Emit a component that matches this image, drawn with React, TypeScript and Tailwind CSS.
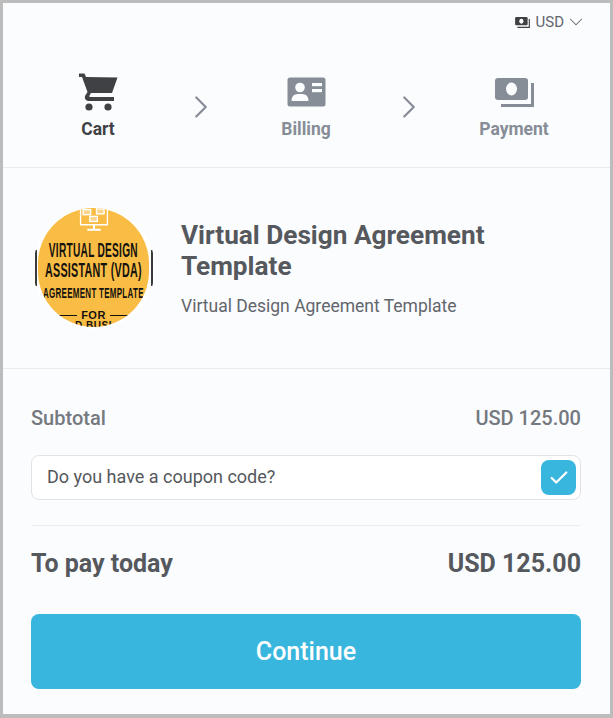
import { ChevronDown, ChevronRight, Check } from "lucide-react";

function CartIcon() {
    return (
        <svg width="40" height="40" viewBox="0 0 40 40" fill="#3f4144">
            <path d="M1 1.5 L6.5 1.5 L8 5 L39.5 5.5 L34 21 L13 21 L11.5 23.5 L11.5 25 L36 25 L36 29 L10 29 Q6 28 7 24 L9.5 20 L4 5 L1 5 Z" />
            <circle cx="11" cy="35" r="3.6" />
            <circle cx="30" cy="35" r="3.6" />
        </svg>
    );
}

function BillingIcon() {
    return (
        <svg width="39" height="30" viewBox="0 0 39 30">
            <rect x="0.5" y="0.5" width="38" height="29" rx="2.5" fill="#868d96" />
            <circle cx="13" cy="10.5" r="4.8" fill="#fbfcfe" />
            <path d="M4.5 24 Q4.5 17 11 17 L15 17 Q21.5 17 21.5 24 Z" fill="#fbfcfe" />
            <rect x="25" y="6" width="10" height="3.2" fill="#fbfcfe" />
            <rect x="25" y="12" width="10" height="3.2" fill="#fbfcfe" />
        </svg>
    );
}

function MoneyIcon({ color, width, height }: { color: string; width: number; height: number }) {
    return (
        <svg width={width} height={height} viewBox="0 0 39 29">
            <rect x="0" y="0" width="33" height="22" rx="3" fill={color} />
            <ellipse cx="16.5" cy="11" rx="5.5" ry="6.5" fill="#fbfcfe" />
            <path d="M36 5 L39 5 L39 29 L6 29 L6 26 L36 26 Z" fill={color} />
        </svg>
    );
}

function Step({ icon, label, active }: { icon: React.ReactNode; label: string; active?: boolean }) {
    return (
        <div className="flex w-[120px] flex-col items-center">
            <div className="flex h-[46px] items-center justify-center">{icon}</div>
            <span className={`mt-[2px] text-[17.5px] leading-[24px] font-bold ${active ? "text-[#3f4144]" : "text-[#868d96]"}`}>
                {label}
            </span>
        </div>
    );
}

function ProductImage() {
    return (
        <div className="relative h-[122px] w-[122px] shrink-0 overflow-hidden rounded-full bg-white">
            <div className="absolute top-[43px] left-[2px] h-[36px] w-[2px] bg-[#3a3a3a]" />
            <div className="absolute top-[43px] left-[118px] h-[36px] w-[2px] bg-[#3a3a3a]" />
            <div className="absolute top-px bottom-[2px] left-[5px] flex w-[111px] flex-col items-center overflow-hidden rounded-full bg-[#f9bd45] font-['Liberation_Sans',sans-serif] text-[#15120e]">
                <svg className="shrink-0" width="36" height="26" viewBox="0 0 42 31" fill="none" stroke="#fff" strokeWidth="1.6">
                    <path d="M5 0 V20 H37 V0" />
                    <path d="M21 20 V25 M13 26 H29" strokeWidth="2.4" />
                    <rect x="8" y="2" width="9" height="6" fill="#fbd58e" />
                    <rect x="24" y="1" width="9" height="6" fill="#fbd58e" />
                    <rect x="16" y="10" width="9" height="6" fill="#fbd58e" />
                </svg>
                <div className="mt-[6px] whitespace-nowrap text-center leading-none font-bold">
                    <div className="scale-x-[.52] text-[19.5px] leading-[20px] tracking-[.5px]">VIRTUAL DESIGN</div>
                    <div className="scale-x-[.55] text-[19.5px] leading-[20px] tracking-[.5px]">ASSISTANT (VDA)</div>
                    <div className="mt-[4px] scale-x-[.57] text-[14px] leading-[18px] tracking-[.5px]">AGREEMENT TEMPLATE</div>
                </div>
                <div className="mt-[8px] flex items-center gap-[4px] text-[11px] leading-[11px] font-bold tracking-[.5px]">
                    <span className="h-[1.5px] w-[20px] bg-[#15120e]" />
                    FOR
                    <span className="h-[1.5px] w-[20px] bg-[#15120e]" />
                </div>
                <div className="text-[10px] leading-[10px] font-bold tracking-[.5px] whitespace-nowrap">D BUSI</div>
            </div>
        </div>
    );
}

export default function App() {
    return (
        <div className="h-[718px] w-[613px] border-[3px] border-b-[4px] border-[#bcbcbc] bg-[#fbfcfe] font-['Roboto',sans-serif]">
            <div className="flex h-[165px] flex-col border-b border-[#e9ebee]">
                <div className="flex items-center justify-end gap-[6px] pt-[8px] pr-[23px] text-[15px] leading-[16px] text-[#62666c]">
                    <MoneyIcon color="#3f4144" width={15} height={11} />
                    <span>USD</span>
                    <ChevronDown size={22} strokeWidth={1.1} className="-ml-[5px]" />
                </div>
                <div className="mt-[36px] flex items-start justify-center pr-px">
                    <Step active label="Cart" icon={<CartIcon />} />
                    <ChevronRight size={38} strokeWidth={1.4} className="mt-[19px] mr-[26px] ml-[24px] text-[#868d96]" />
                    <Step label="Billing" icon={<BillingIcon />} />
                    <ChevronRight size={38} strokeWidth={1.4} className="mt-[19px] mr-[26px] ml-[24px] text-[#868d96]" />
                    <Step label="Payment" icon={<MoneyIcon color="#868d96" width={39} height={29} />} />
                </div>
            </div>

            <div className="flex h-[201px] items-center gap-[26px] border-b border-[#e9ebee] pr-[28px] pl-[30px]">
                <ProductImage />
                <div className="pt-px">
                    <h2 className="text-[26.2px] leading-[31px] font-bold text-[#55585d]">
                        Virtual Design Agreement
                        <br />
                        Template
                    </h2>
                    <p className="mt-[12px] text-[17.5px] leading-[24px] text-[#62666c]">Virtual Design Agreement Template</p>
                </div>
            </div>

            <div className="pr-[29px] pl-[28px]">
                <div className="mt-[37px] flex items-center justify-between text-[20px] leading-[24px] font-medium text-[#74797f]">
                    <span>Subtotal</span>
                    <span>USD 125.00</span>
                </div>
                <div className="mt-[25px] flex h-[45px] items-center justify-between rounded-[8px] border border-[#e1e3e6] bg-white pr-[4px] pl-[15px]">
                    <span className="pb-[2px] text-[18px] text-[#55585d]">Do you have a coupon code?</span>
                    <span className="flex h-[35px] w-[35px] items-center justify-center rounded-[8px] bg-[#38b6de]">
                        <Check size={22} strokeWidth={2.4} className="text-white" />
                    </span>
                </div>
                <div className="mt-[25px] border-t border-[#eceef0]" />
                <div className="mt-[23px] flex items-center justify-between text-[25px] leading-[30px] font-bold text-[#55585d]">
                    <span>To pay today</span>
                    <span>USD 125.00</span>
                </div>
                <button className="mt-[35px] h-[75px] w-full rounded-[8px] bg-[#38b6de] text-[25px] font-medium text-white">
                    Continue
                </button>
            </div>
        </div>
    );
}
